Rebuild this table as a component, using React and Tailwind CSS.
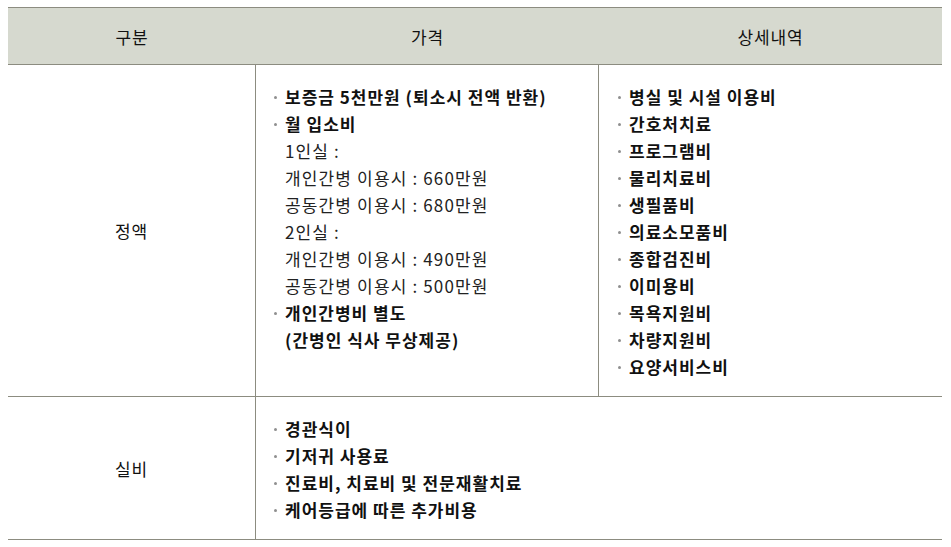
import React from "react";

const font = { fontFamily: '"Noto Sans CJK KR", "Noto Sans", sans-serif' };

function Bullet({ children }) {
  return (
    <div className="flex items-center h-[27px]">
      <span className="w-[11px] flex items-center shrink-0 pt-[2px]">
        <span className="w-[3px] h-[3px] rounded-full bg-[#8f8f8f]" />
      </span>
      <span className="font-bold text-[#111] tracking-[1px]">{children}</span>
    </div>
  );
}

function Line({ children }) {
  return (
    <div className="flex items-center h-[27px]">
      <span className="w-[11px] shrink-0" />
      <span className="text-[#222] tracking-[1.15px]">{children}</span>
    </div>
  );
}

export default function App() {
  const detail = [
    "병실 및 시설 이용비",
    "간호처치료",
    "프로그램비",
    "물리치료비",
    "생필품비",
    "의료소모품비",
    "종합검진비",
    "이미용비",
    "목욕지원비",
    "차량지원비",
    "요양서비스비",
  ];
  return (
    <div className="bg-white w-[951px] h-[547px] pt-[7px] pl-[8px]" style={font}>
      <div className="w-[934px] border-t border-b border-[#8c8c80] grid grid-cols-[248px_343px_1fr] text-[17px] tracking-[0.8px] leading-[27px] text-[#111]">
        <div className="h-[57px] bg-[#d6d9cf] border-b border-[#8c8c80] flex items-center justify-center">구분</div>
        <div className="h-[57px] bg-[#d6d9cf] border-b border-[#8c8c80] flex items-center justify-center">가격</div>
        <div className="h-[57px] bg-[#d6d9cf] border-b border-[#8c8c80] flex items-center justify-center">상세내역</div>

        <div className="border-r border-b border-[#8c8c80] flex items-center justify-center">정액</div>
        <div className="border-r border-b border-[#8c8c80] pl-[18px] pt-[18px] pb-[16px]">
          <Bullet>보증금 5천만원 (퇴소시 전액 반환)</Bullet>
          <Bullet>월 입소비</Bullet>
          <Line>1인실 :</Line>
          <Line>개인간병 이용시 : 660만원</Line>
          <Line>공동간병 이용시 : 680만원</Line>
          <Line>2인실 :</Line>
          <Line>개인간병 이용시 : 490만원</Line>
          <Line>공동간병 이용시 : 500만원</Line>
          <Bullet>개인간병비 별도</Bullet>
          <div className="flex items-center h-[27px]">
            <span className="w-[11px] shrink-0" />
            <span className="font-bold text-[#111] tracking-[1px]">(간병인 식사 무상제공)</span>
          </div>
        </div>
        <div className="border-b border-[#8c8c80] pl-[19px] pt-[18px] pb-[16px]">
          {detail.map((d) => (
            <Bullet key={d}>{d}</Bullet>
          ))}
        </div>

        <div className="border-r border-[#8c8c80] flex items-center justify-center">실비</div>
        <div className="col-span-2 pl-[18px] pt-[18px] pb-[16px]">
          <Bullet>경관식이</Bullet>
          <Bullet>기저귀 사용료</Bullet>
          <Bullet>진료비, 치료비 및 전문재활치료</Bullet>
          <Bullet>케어등급에 따른 추가비용</Bullet>
        </div>
      </div>
    </div>
  );
}
